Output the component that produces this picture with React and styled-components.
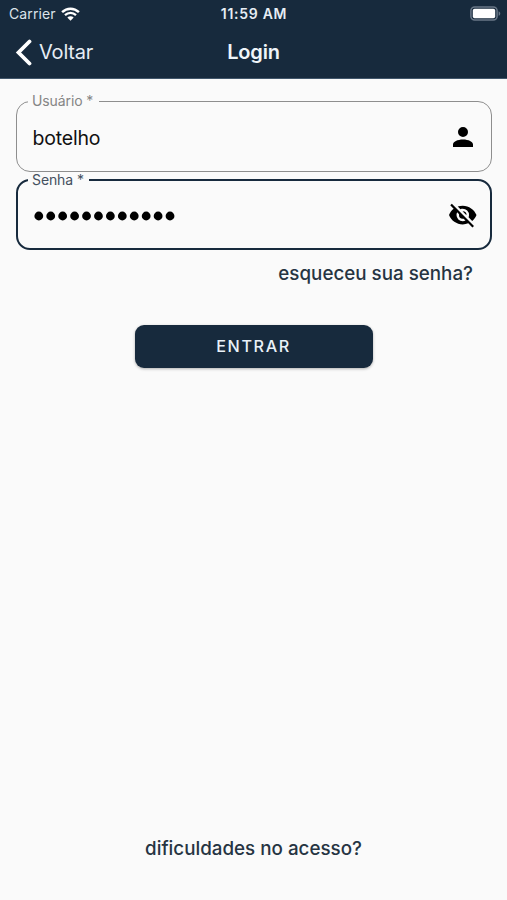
import React from "react";
import styled, { createGlobalStyle } from "styled-components";

function App() {
  return (
    <>
      <GlobalStyle />
      <Screen>
        <Header>
          <StatusBar>
            <Carrier>
              Carrier
              <WifiIcon />
            </Carrier>
            <Clock>11:59 AM</Clock>
            <BatteryIcon />
          </StatusBar>
          <NavBar>
            <BackButton type="button">
              <ChevronIcon />
              Voltar
            </BackButton>
            <Title>Login</Title>
          </NavBar>
        </Header>

        <Form onSubmit={(e) => e.preventDefault()}>
          <Field>
            <Label $width={71}>Usuário *</Label>
            <FieldRow>
              <Value>botelho</Value>
              <AccountIcon />
            </FieldRow>
          </Field>

          <Field $focused>
            <Label $focused $width={61}>
              Senha *
            </Label>
            <FieldRow>
              <PasswordDots />
              <EyeOffIcon />
            </FieldRow>
          </Field>

          <ForgotLink>esqueceu sua senha?</ForgotLink>
          <SubmitButton type="submit">ENTRAR</SubmitButton>
        </Form>

        <HelpLink>dificuldades no acesso?</HelpLink>
      </Screen>
    </>
  );
}

export default App;

// icons
function WifiIcon() {
  return (
    <svg width="19" height="14" viewBox="0 0 19 14" fill="none">
      <path d="M1.1 5.1C6 .5 13 .5 17.9 5.1" stroke="#fff" strokeWidth="2.5" />
      <path d="M4 8.2C7.2 5.2 11.8 5.2 15 8.2" stroke="#fff" strokeWidth="2.3" />
      <path d="M6.3 10.6C8.2 8.9 10.8 8.9 12.7 10.6L9.5 13.7Z" fill="#fff" />
    </svg>
  );
}

function BatteryIcon() {
  return (
    <svg width="31" height="15" viewBox="0 0 31 15">
      <rect x="0.9" y="0.9" width="26.2" height="13.2" rx="3.8" fill="none" stroke="#697787" strokeWidth="1.5" />
      <rect x="2.8" y="2.8" width="22.4" height="9.4" rx="1.8" fill="#fff" />
      <path d="M28.6 5.2C30.8 6 30.8 9 28.6 9.8Z" fill="#697787" />
    </svg>
  );
}

function ChevronIcon() {
  return (
    <svg width="17" height="27" viewBox="0 0 17 27" fill="none">
      <path d="M14.5 2.5L3.5 13.5L14.5 24.5" stroke="#fff" strokeWidth="3.8" strokeLinecap="round" />
    </svg>
  );
}

function AccountIcon() {
  return (
    <svg width="30" height="30" viewBox="0 0 24 24">
      <path d="M12,4A4,4 0 0,1 16,8A4,4 0 0,1 12,12A4,4 0 0,1 8,8A4,4 0 0,1 12,4M12,14C16.42,14 20,15.79 20,18V20H4V18C4,15.79 7.58,14 12,14Z" />
    </svg>
  );
}

function EyeOffIcon() {
  return (
    <svg width="30" height="30" viewBox="-0.6 0.8 24 24">
      <path d="M11.83,9L15,12.16C15,12.11 15,12.05 15,12A3,3 0 0,0 12,9C11.94,9 11.89,9 11.83,9M7.53,9.8L9.08,11.35C9.03,11.56 9,11.77 9,12A3,3 0 0,0 12,15C12.22,15 12.44,14.97 12.65,14.92L14.2,16.47C13.53,16.8 12.79,17 12,17A5,5 0 0,1 7,12C7,11.21 7.2,10.47 7.53,9.8M2,4.27L4.28,6.55L4.73,7C3.08,8.3 1.78,10 1,12C2.73,16.39 7,19.5 12,19.5C13.55,19.5 15.03,19.2 16.38,18.66L16.81,19.08L19.73,22L21,20.73L3.27,3M12,7A5,5 0 0,1 17,12C17,12.64 16.87,13.26 16.64,13.82L19.57,16.75C21.07,15.5 22.27,13.86 23,12C21.27,7.61 17,4.5 12,4.5C10.6,4.5 9.26,4.75 8,5.2L10.17,7.35C10.74,7.13 11.35,7 12,7Z" />
    </svg>
  );
}

function PasswordDots() {
  return (
    <svg width="144" height="10" viewBox="0 0 144 10">
      {Array.from({ length: 12 }, (_, i) => (
        <circle key={i} cx={5.8 + i * 11.93} cy="5" r="4.4" />
      ))}
    </svg>
  );
}

// styles
const GlobalStyle = createGlobalStyle`
  * {
    box-sizing: border-box;
  }

  body {
    margin: 0;
    background: #fafafa;
    font-family: Inter, "Liberation Sans", sans-serif;
  }
`;

const Screen = styled.main`
  display: flex;
  flex-direction: column;
  height: 900px;
  background: #fafafa;
`;

const Header = styled.header`
  height: 79px;
  background: #172a3d;
  border-bottom: 1px solid #41566b;
  color: #fff;
`;

const StatusBar = styled.div`
  display: grid;
  grid-template-columns: 1fr auto 1fr;
  align-items: center;
  height: 27px;
  padding: 0 6px 0 9px;

  > :last-child {
    justify-self: end;
  }
`;

const Carrier = styled.span`
  display: flex;
  align-items: center;
  gap: 5px;
  font-size: 14px;
  letter-spacing: 0.1px;
  color: #dce3ea;
`;

const Clock = styled.span`
  margin-right: 2px;
  font-size: 14px;
  font-weight: 600;
  letter-spacing: 0.7px;
  color: #e6edf4;
`;

const NavBar = styled.nav`
  display: grid;
  grid-template-columns: 1fr auto 1fr;
  align-items: center;
  height: 50px;
  padding: 0 15px;
`;

const BackButton = styled.button`
  display: flex;
  align-items: center;
  gap: 7px;
  padding: 0;
  border: 0;
  background: none;
  color: #e6edf4;
  font: inherit;
  font-size: 20px;
  letter-spacing: -0.2px;
`;

const Title = styled.h1`
  margin: 0;
  font-size: 20px;
  font-weight: 600;
  letter-spacing: -0.2px;
  color: #eff5fa;
`;

const Form = styled.form`
  display: flex;
  flex-direction: column;
  padding: 14px 15px 0;
`;

const Field = styled.fieldset`
  min-width: 0;
  height: ${({ $focused }) => ($focused ? 78 : 79)}px;
  margin: 0 0 0 0.5px;
  padding: 0 13px 0 ${({ $focused }) => ($focused ? 10 : 11)}px;
  border: ${({ $focused }) => ($focused ? "2px solid #172a3d" : "1px solid #8e8e8e")};
  border-radius: 14px;
`;

const Label = styled.legend`
  width: ${({ $width }) => $width}px;
  padding: 0 4.5px;
  font-size: 14px;
  line-height: 16px;
  letter-spacing: -0.1px;
  white-space: nowrap;
  color: ${({ $focused }) => ($focused ? "#44505e" : "#858585")};
`;

const FieldRow = styled.div`
  display: flex;
  align-items: center;
  justify-content: space-between;
  height: 56px;
  padding-left: 5px;
`;

const Value = styled.span`
  padding-top: 2px;
  font-size: 19.5px;
  letter-spacing: -0.2px;
  color: #111;
`;

const ForgotLink = styled.a`
  align-self: flex-end;
  margin: 12px 19px 0 0;
  font-size: 18.8px;
  font-weight: 500;
  line-height: 24px;
  color: #263442;
`;

const SubmitButton = styled.button`
  align-self: center;
  width: 238px;
  height: 43px;
  margin-top: 39px;
  padding: 0 0 1px;
  border: 0;
  border-radius: 9px;
  background: #172a3d;
  box-shadow: 0 1px 3px rgba(0, 0, 0, 0.3);
  color: #e9f1f8;
  font: inherit;
  font-size: 16.2px;
  font-weight: 500;
  letter-spacing: 1.6px;
`;

const HelpLink = styled.a`
  margin: auto auto 39px;
  font-size: 18.8px;
  font-weight: 500;
  line-height: 24px;
  color: #263442;
`;
